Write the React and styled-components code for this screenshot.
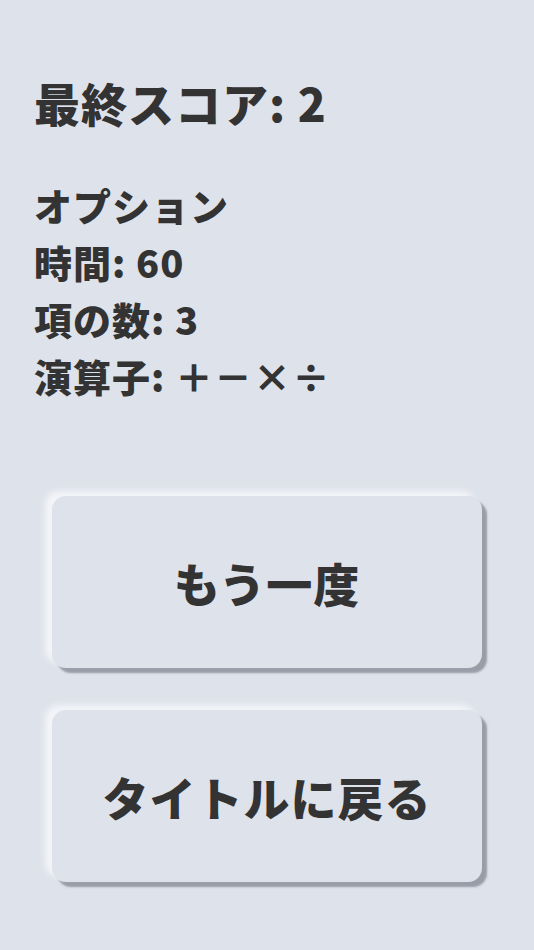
import React from "react";
import styled, { createGlobalStyle } from "styled-components";

const GlobalStyle = createGlobalStyle`
  html, body {
    margin: 0;
    padding: 0;
    background: #dee2ea;
  }
  body {
    font-family: "Noto Sans CJK JP", "Noto Sans", sans-serif;
    color: #333333;
  }
`;

const Page = styled.main`
  min-height: 950px;
  box-sizing: border-box;
  padding: 68px 34px 40px;
  display: flex;
  flex-direction: column;
`;

const Title = styled.h1`
  margin: 0;
  font-size: 46px;
  font-weight: 900;
  letter-spacing: 1px;
  line-height: 68px;
`;

const Options = styled.section`
  margin-top: 40px;
  display: flex;
  flex-direction: column;
`;

const OptionLine = styled.p`
  margin: 0;
  font-size: 38px;
  font-weight: 900;
  letter-spacing: 1px;
  line-height: 57px;
`;

const Buttons = styled.div`
  margin-top: 92px;
  padding: 0 18px;
  display: flex;
  flex-direction: column;
  gap: 42px;
`;

const Button = styled.button`
  height: 172px;
  border: none;
  border-radius: 14px;
  background: #dee2ea;
  color: #333333;
  font-family: inherit;
  font-size: 46px;
  font-weight: 900;
  letter-spacing: 1px;
  cursor: pointer;
  box-shadow: -7px -5px 6px rgba(244, 246, 250, 0.95),
    5px 5px 2px rgba(140, 145, 156, 0.85);
`;

const options = ["オプション", "時間: 60", "項の数: 3", "演算子: ＋－×÷"];

const App = () => {
  return (
    <>
      <GlobalStyle />
      <Page>
        <Title>最終スコア: 2</Title>
        <Options>
          {options.map((line) => (
            <OptionLine key={line}>{line}</OptionLine>
          ))}
        </Options>
        <Buttons>
          <Button>もう一度</Button>
          <Button>タイトルに戻る</Button>
        </Buttons>
      </Page>
    </>
  );
};

export default App;
